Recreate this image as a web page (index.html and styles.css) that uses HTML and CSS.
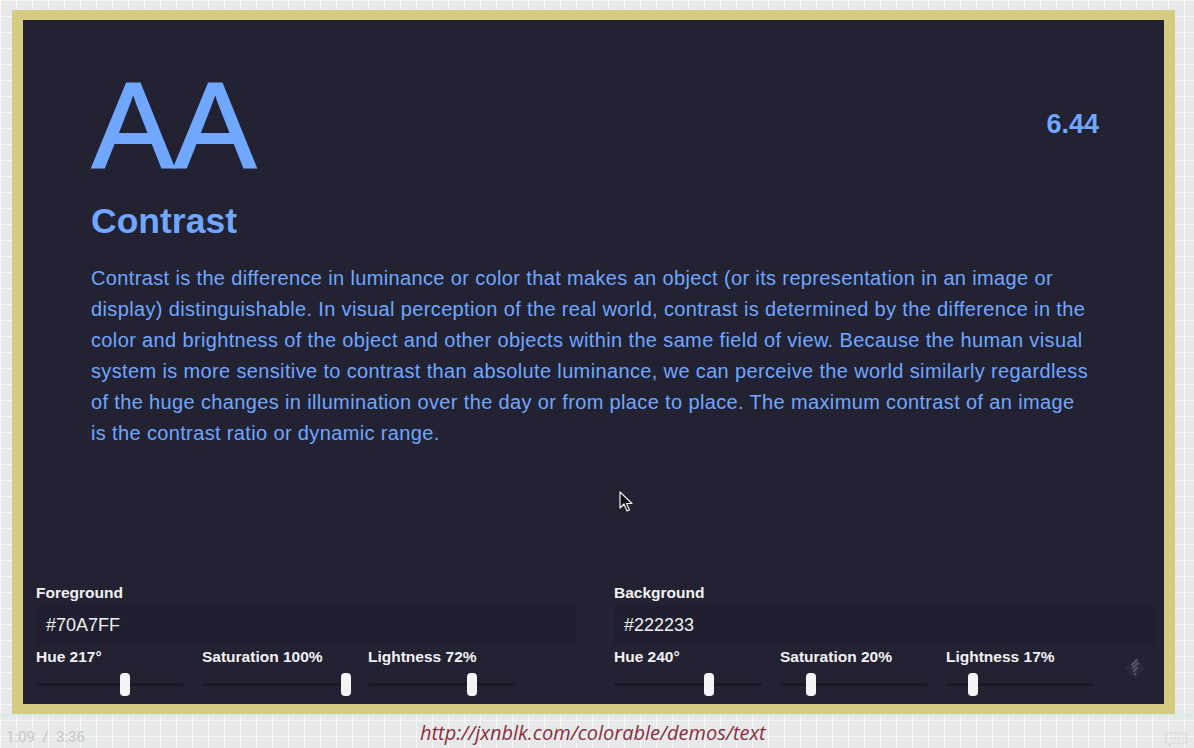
FILE: index.html
```html
<!DOCTYPE html>
<html lang="en">
<head>
<meta charset="utf-8">
<title>Colorable – Text demo</title>
<link rel="stylesheet" href="styles.css">
</head>
<body>
<div class="stage">
  <div class="frame">
    <div class="panel">
      <main class="main">
        <div class="head">
          <div class="grade">AA</div>
          <div class="ratio">6.44</div>
        </div>
        <h1 class="title">Contrast</h1>
        <p class="text">Contrast is the difference in luminance or color that makes an object (or its representation in an image or display) distinguishable. In visual perception of the real world, contrast is determined by the difference in the color and brightness of the object and other objects within the same field of view. Because the human visual system is more sensitive to contrast than absolute luminance, we can perceive the world similarly regardless of the huge changes in illumination over the day or from place to place. The maximum contrast of an image is the contrast ratio or dynamic range.</p>
      </main>
      <div class="controls">
        <section class="group">
          <label class="label">Foreground</label>
          <div class="input">#70A7FF</div>
          <div class="sliders">
            <div class="slider"><span class="label">Hue 217°</span><div class="track"><span class="thumb" style="left: 60.3%"></span></div></div>
            <div class="slider"><span class="label">Saturation 100%</span><div class="track"><span class="thumb" style="left: 97%"></span></div></div>
            <div class="slider"><span class="label">Lightness 72%</span><div class="track"><span class="thumb" style="left: 70%"></span></div></div>
          </div>
        </section>
        <section class="group">
          <label class="label">Background</label>
          <div class="input">#222233</div>
          <div class="sliders">
            <div class="slider"><span class="label">Hue 240°</span><div class="track"><span class="thumb" style="left: 64.5%"></span></div></div>
            <div class="slider"><span class="label">Saturation 20%</span><div class="track"><span class="thumb" style="left: 21%"></span></div></div>
            <div class="slider"><span class="label">Lightness 17%</span><div class="track"><span class="thumb" style="left: 18%"></span></div></div>
            <div class="logo">
              <svg width="24" height="24" viewBox="0 0 24 24">
                <rect x="5" y="5" width="14" height="14" transform="rotate(45 12 12)" fill="#2a2a3a"/>
                <path d="M9 9 L14 4 M10 12 L15 7 M11 15 L14 12" stroke="#555566" stroke-width="2" stroke-linecap="round"/>
                <circle cx="12" cy="18" r="1.3" fill="#555566"/>
              </svg>
            </div>
          </div>
        </section>
      </div>
      <svg class="cursor" width="14" height="22" viewBox="0 0 14 22">
        <path d="M1 1 L1 17 L5 13 L8 20 L10.5 19 L7.5 12.5 L13 12.5 Z" fill="#111" stroke="#eee" stroke-width="1.2" stroke-linejoin="round"/>
      </svg>
    </div>
  </div>
</div>
<footer class="bar">
  <span class="time">1:09&nbsp; / &nbsp;3:36</span>
  <span class="url">http://jxnblk.com/colorable/demos/text</span>
  <svg class="cc" width="22" height="15" viewBox="0 0 22 15">
    <path d="M1 1 H21 V11 H7 L4 14 V11 H1 Z" fill="none" stroke="#d8d8d8" stroke-width="1.2"/>
    <path d="M5 6 H7 M9 6 H11 M13 6 H15 M17 6 H19" stroke="#d8d8d8" stroke-width="1.4"/>
  </svg>
</footer>
</body>
</html>
```

FILE: styles.css
```css
* { box-sizing: border-box; }
html, body {
  margin: 0;
  padding: 0;
}
body {
  width: 1194px;
  height: 748px;
  overflow: hidden;
  font-family: "Liberation Sans", Arial, sans-serif;
  background-color: #e7e8e9;
  background-image:
    linear-gradient(rgba(255,255,255,0.55) 1px, transparent 1px),
    linear-gradient(90deg, rgba(255,255,255,0.55) 1px, transparent 1px);
  background-size: 16px 16px;
}
.stage {
  padding: 10px 19px 0 12px;
}
.frame {
  height: 704px;
  border-style: solid;
  border-color: #d5cc81;
  border-width: 10px 11px 10px 11px;
  background: #222233;
}
.panel {
  position: relative;
  height: 100%;
  display: flex;
  flex-direction: column;
  justify-content: space-between;
  background: #222233;
}
.main {
  padding: 44px 62px 0 68px;
  color: #70A7FF;
}
.head {
  display: flex;
  justify-content: space-between;
  align-items: flex-start;
  padding-right: 3px;
}
.grade {
  font-size: 123px;
  line-height: 1;
  font-weight: 400;
  -webkit-text-stroke: 2px #70A7FF;
  padding-left: 1px;
}
.ratio {
  font-size: 27px;
  line-height: 1;
  font-weight: 700;
  margin-top: 47px;
}
.title {
  margin: 17px 0 0;
  font-size: 35.5px;
  line-height: 1;
  font-weight: 700;
}
.text {
  margin: 23px 0 0;
  max-width: 1001px;
  font-size: 20px;
  letter-spacing: 0.36px;
  line-height: 31px;
}
.controls {
  display: flex;
  gap: 37px;
  padding: 0 9px 8px 13px;
}
.group {
  flex: 1;
  display: flex;
  flex-direction: column;
}
.label {
  color: #f2f2f2;
  font-size: 15.5px;
  font-weight: 700;
  line-height: 18px;
  white-space: nowrap;
}
.input {
  margin-top: 3px;
  height: 41px;
  padding: 0 10px;
  display: flex;
  align-items: center;
  background: #1f1f2f;
  color: #f0f0f0;
  font-size: 18px;
}
.sliders {
  display: flex;
  gap: 18px;
  margin-top: 2px;
  align-items: flex-start;
}
.slider {
  width: 148px;
  display: flex;
  flex-direction: column;
}
.track {
  position: relative;
  margin-top: 7px;
  height: 23px;
}
.track::before {
  content: "";
  position: absolute;
  left: 0;
  right: 0;
  top: 10px;
  height: 3px;
  border-radius: 2px;
  background: #1a1a27;
}
.thumb {
  position: absolute;
  top: 0;
  width: 10px;
  height: 23px;
  margin-left: -5px;
  border-radius: 4px;
  background: #f4f4f4;
}
.logo {
  margin-left: auto;
  margin-top: 8px;
  margin-right: 8px;
}
.cursor {
  position: absolute;
  left: 596px;
  top: 471px;
}
.bar {
  position: relative;
  height: 34px;
  border-top: 2px solid rgba(210,235,230,0.6);
}
.time {
  position: absolute;
  left: 6px;
  top: 12px;
  font-family: Roboto, "Liberation Sans", sans-serif;
  font-size: 15px;
  color: #c6c7c8;
}
.url {
  position: absolute;
  left: 420px;
  top: 3px;
  font-family: "Open Sans", "DejaVu Sans", sans-serif;
  font-style: italic;
  font-size: 20px;
  color: #8c2e3e;
}
.cc {
  position: absolute;
  left: 1165px;
  top: 16px;
}
```
